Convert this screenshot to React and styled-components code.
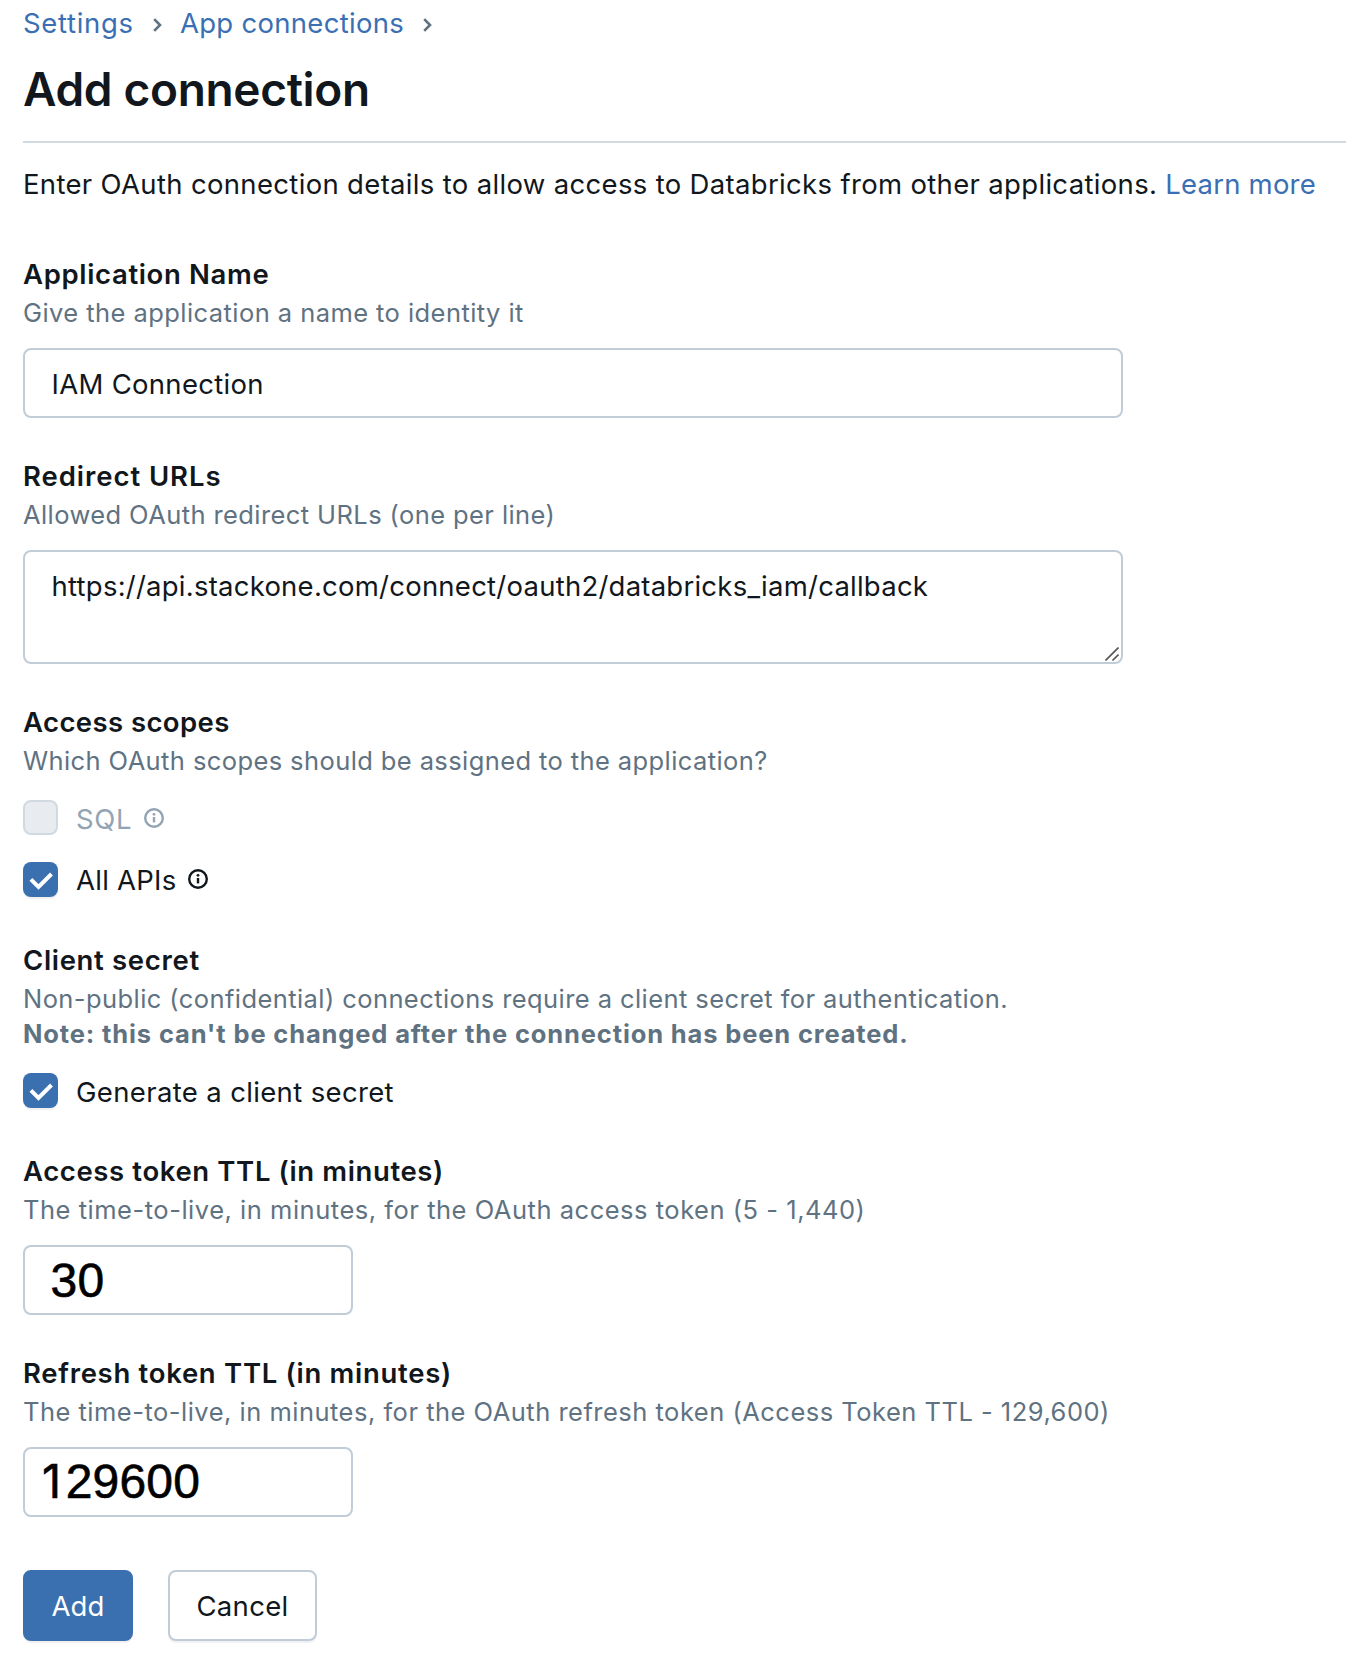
import React from "react";
import styled, { createGlobalStyle, css } from "styled-components";

const color = {
  text: "#11171c",
  muted: "#5f7281",
  link: "#3a70b3",
  primary: "#3a6fb0",
  border: "#c0cdd8",
  rule: "#d1d9e1",
  disabledText: "#92a4b3",
  disabledFill: "#e8ecf0",
};

const GlobalStyle = createGlobalStyle`
  *, *::before, *::after { box-sizing: border-box; }
  body {
    margin: 0;
    background: #fff;
    color: ${color.text};
    font-family: Inter, "Liberation Sans", sans-serif;
    font-size: 27.5px;
    line-height: 41px;
  }
`;

const tracking = css`
  letter-spacing: ${(p) => p.$track ?? 0.3}px;
`;

const Page = styled.main`
  display: flex;
  flex-direction: column;
  min-height: 1670px;
  padding: 3px 0 0 23px;
  white-space: nowrap;
`;

const Breadcrumb = styled.nav`
  display: flex;
  align-items: center;
  height: 41px;
`;

const Link = styled.a`
  color: ${color.link};
  text-decoration: none;
  ${tracking}
`;

const ChevronIcon = styled.svg`
  flex: none;
  width: 9px;
  height: 14px;
  margin: 2px 18px 0 19.2px;
  fill: none;
  stroke: ${color.muted};
  stroke-width: 2.6;
`;

const Header = styled.header`
  padding: 17px 0 24px;
  border-bottom: 2px solid ${color.rule};
`;

const Title = styled.h1`
  margin: 0;
  font-size: 46px;
  font-weight: 600;
  line-height: 56px;
  letter-spacing: -0.32px;
`;

const Intro = styled.p`
  margin: 21px 0 11px;
  letter-spacing: 0.33px;
`;

const Field = styled.section`
  display: flex;
  flex-direction: column;
  align-items: flex-start;
  margin-top: ${(p) => p.$space ?? 38}px;
`;

const Label = styled.h2`
  margin: 0;
  font-size: 27.5px;
  font-weight: 600;
  line-height: 41px;
  ${tracking}
`;

const Hint = styled.p`
  margin: 0 0 1px;
  color: ${color.muted};
  font-size: 25.5px;
  line-height: 35px;
  ${tracking}
`;

const Note = styled.strong`
  display: block;
  font-weight: 700;
  letter-spacing: 0.86px;
`;

const controlBox = css`
  display: block;
  margin: 17px 0 0;
  border: 2px solid ${color.border};
  border-radius: 8px;
  background: #fff;
  outline: none;
`;

const TextInput = styled.input`
  ${controlBox}
  width: 1100px;
  height: 70px;
  padding: 13px 26px 12px 26.5px;
  color: ${color.text};
  font: inherit;
  line-height: 41px;
  ${tracking}
`;

const TextAreaFrame = styled.div`
  position: relative;
`;

const TextArea = styled.textarea`
  ${controlBox}
  width: 1100px;
  height: 114px;
  padding: 14px 26px 14px 26.5px;
  color: ${color.text};
  font: inherit;
  line-height: 41px;
  resize: none;
  overflow: hidden;
  ${tracking}
`;

const ResizeGrip = styled.svg`
  position: absolute;
  right: 4px;
  bottom: 3px;
  width: 14px;
  height: 14px;
  stroke: #555;
  stroke-width: 1.6;
`;

const NumberBox = styled.div`
  ${controlBox}
  width: 330px;
  height: 70px;
  padding: ${(p) => p.$top}px 0 0 ${(p) => p.$left}px;
  color: #000;
  font-family: "Liberation Sans", Arial, sans-serif;
  font-size: 48px;
  line-height: 53px;
  letter-spacing: 0.2px;
  -webkit-text-stroke: 0.6px #000;
`;

const PlainOne = styled.span`
  display: inline-block;
  width: 26.7px;
  padding-left: 3px;
  font-family: Inter, sans-serif;
  font-size: 47px;
  line-height: 53px;
`;

const CheckRow = styled.label`
  display: flex;
  align-items: flex-start;
  height: 35px;
  margin-top: ${(p) => p.$space ?? 21}px;
  color: ${(p) => (p.$disabled ? color.disabledText : color.text)};
`;

const CheckBox = styled.span`
  flex: none;
  width: 35px;
  height: 35px;
  margin-right: 18px;
  border-radius: 8px;
  ${(p) =>
    p.$disabled
      ? css`
          border: 2px solid ${color.rule};
          background: ${color.disabledFill};
        `
      : css`
          background: ${color.primary};
          box-shadow: 0 2px 1px rgba(0, 0, 0, 0.06);
        `}
`;

const CheckMark = styled.svg`
  display: block;
  width: 35px;
  height: 35px;
  fill: none;
  stroke: #fff;
  stroke-width: 4;
`;

const CheckText = styled.span`
  line-height: ${(p) => p.$line ?? 39}px;
  ${tracking}
`;

const InfoSvg = styled.svg`
  flex: none;
  width: 20px;
  height: 20px;
  margin: ${(p) => p.$top}px 0 0 12px;
`;

const Actions = styled.div`
  display: flex;
  gap: 35px;
  margin-top: 53px;
`;

const Button = styled.button`
  width: ${(p) => p.$width}px;
  height: 71px;
  padding: 14px 0 12px;
  border: 2px solid ${(p) => (p.$primary ? color.primary : color.border)};
  border-radius: 8px;
  background: ${(p) => (p.$primary ? color.primary : "#fff")};
  color: ${(p) => (p.$primary ? "#fff" : color.text)};
  box-shadow: 0 2px 1px rgba(0, 0, 0, 0.06);
  font: inherit;
  line-height: 41px;
  ${tracking}
`;

function Chevron() {
  return (
    <ChevronIcon viewBox="0 0 9 14">
      <path d="M1.2 1.2 7 7 1.2 12.8" />
    </ChevronIcon>
  );
}

function Info({ top }) {
  return (
    <InfoSvg $top={top} viewBox="0 0 20 20">
      <circle cx="10" cy="10" r="8.8" fill="none" stroke="currentColor" strokeWidth="2.4" />
      <circle cx="10" cy="6.3" r="1.4" fill="currentColor" />
      <rect x="8.8" y="9" width="2.4" height="5.4" fill="currentColor" />
    </InfoSvg>
  );
}

function Check({ disabled, space, line, track, iconTop, children }) {
  return (
    <CheckRow $disabled={disabled} $space={space}>
      <CheckBox $disabled={disabled}>
        {!disabled && (
          <CheckMark viewBox="0 0 35 35">
            <path d="M7.9 17.4 15.5 24.9 28.5 12" />
          </CheckMark>
        )}
      </CheckBox>
      <CheckText $line={line} $track={track}>
        {children}
      </CheckText>
      {iconTop && <Info top={iconTop} />}
    </CheckRow>
  );
}

export default function App() {
  return (
    <>
      <GlobalStyle />
      <Page>
        <Breadcrumb>
          <Link $track={0.68}>Settings</Link>
          <Chevron />
          <Link $track={0.29}>App connections</Link>
          <Chevron />
        </Breadcrumb>
        <Header>
          <Title>Add connection</Title>
        </Header>
        <Intro>
          Enter OAuth connection details to allow access to Databricks from other applications.{" "}
          <Link $track={0.2}>Learn more</Link>
        </Intro>

        <Field>
          <Label $track={0.656}>Application Name</Label>
          <Hint $track={0.436}>Give the application a name to identity it</Hint>
          <TextInput $track={0.3} defaultValue="IAM Connection" />
        </Field>

        <Field>
          <Label $track={0.94}>Redirect URLs</Label>
          <Hint $track={0.41}>Allowed OAuth redirect URLs (one per line)</Hint>
          <TextAreaFrame>
            <TextArea
              $track={0.24}
              spellCheck={false}
              defaultValue="https://api.stackone.com/connect/oauth2/databricks_iam/callback"
            />
            <ResizeGrip viewBox="0 0 14 14">
              <path d="M.5 13.5 13.5.5M7.5 13.5 13.5 7.5" />
            </ResizeGrip>
          </TextAreaFrame>
        </Field>

        <Field>
          <Label $track={0.41}>Access scopes</Label>
          <Hint $track={0.4}>Which OAuth scopes should be assigned to the application?</Hint>
          <Check disabled track={0.69} iconTop={8}>
            SQL
          </Check>
          <Check space={27} line={37} track={0.25} iconTop={7}>
            All APIs
          </Check>
        </Field>

        <Field $space={43}>
          <Label $track={0.67}>Client secret</Label>
          <Hint $track={0.42}>
            Non-public (confidential) connections require a client secret for authentication.
            <Note>Note: this can't be changed after the connection has been created.</Note>
          </Hint>
          <Check track={0.35}>Generate a client secret</Check>
        </Field>

        <Field $space={43}>
          <Label $track={0.62}>Access token TTL (in minutes)</Label>
          <Hint $track={0.52}>
            The time-to-live, in minutes, for the OAuth access token (5 - 1,440)
          </Hint>
          <NumberBox $top={7} $left={25.5}>
            30
          </NumberBox>
        </Field>

        <Field>
          <Label $track={0.7}>Refresh token TTL (in minutes)</Label>
          <Hint $track={0.49}>
            The time-to-live, in minutes, for the OAuth refresh token (Access Token TTL - 129,600)
          </Hint>
          <NumberBox $top={5} $left={14}>
            <PlainOne>1</PlainOne>29600
          </NumberBox>
        </Field>

        <Actions>
          <Button $primary $width={110} $track={0.1}>
            Add
          </Button>
          <Button $width={149} $track={0.33}>
            Cancel
          </Button>
        </Actions>
      </Page>
    </>
  );
}
